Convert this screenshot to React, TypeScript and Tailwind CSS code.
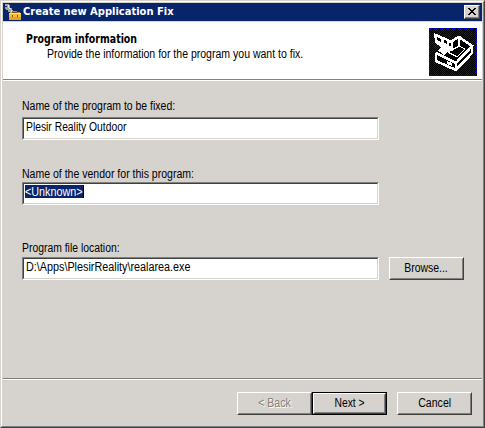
import React from "react";

const FONT = "font-['Liberation_Sans',Arial,sans-serif]";

function Label({ children, scale }: { children: React.ReactNode; scale: string }) {
  return (
    <span className={`block h-[14px] w-max origin-left whitespace-pre text-[12px] leading-[14px] ${scale}`}>
      {children}
    </span>
  );
}

function Field({ value, scale, selected = false }: { value: string; scale: string; selected?: boolean }) {
  return (
    <div className="h-[23px] w-[357px] border border-t-[#808080] border-l-[#808080] border-r-white border-b-white">
      <div className="flex h-[21px] border border-t-[#404040] border-l-[#404040] border-r-[#d6d3ce] border-b-[#d6d3ce] bg-white pl-px pt-px">
        <span
          className={`h-[13px] whitespace-pre text-[12px] leading-[14px] ${
            selected ? "w-[59px] border-r border-black bg-[#08246b] text-white" : "pl-px"
          }`}
        >
          <span className={`block w-max origin-left ${scale}`}>{value}</span>
        </span>
      </div>
    </div>
  );
}

function Button({
  children,
  scale,
  primary = false,
  disabled = false,
}: {
  children: React.ReactNode;
  scale: string;
  primary?: boolean;
  disabled?: boolean;
}) {
  return (
    <button disabled={disabled} className={`block h-[23px] w-[75px] ${primary ? "border border-black" : ""}`}>
      <span className="block h-full border border-t-white border-l-white border-r-[#404040] border-b-[#404040]">
        <span
          className={`flex h-full items-center justify-center border border-t-[#d6d3ce] border-l-[#d6d3ce] border-r-[#808080] border-b-[#808080] whitespace-pre text-[12px] leading-[14px] ${
            disabled ? "text-[#808080] [text-shadow:1px_1px_0_#fff]" : ""
          }`}
        >
          <span className={`block pb-px ${scale}`}>{children}</span>
        </span>
      </span>
    </button>
  );
}

function ToolboxIcon() {
  return (
    <svg width="17" height="17" viewBox="0 0 17 17" shapeRendering="crispEdges">
      <path d="M1 0h4v1h1v3h2v2h1v2h1v3H6V8H4V6H2V5H1V3h2V2H1z" fill="#a5a5a0" />
      <path d="M4 1h1v3H4zM5 4h2v1H5zM7 6h1v2H7z" fill="#e3e3de" />
      <path d="M5 9h3V7h5v1h3v1h1v7H5z" fill="#c98a10" />
      <path d="M5 9h12v4H5z" fill="#f7bd35" />
      <path d="M5 13h12v3H5z" fill="#e9a11b" />
      <path d="M8 8h5v1H8zM8 11h1v2H8zM13 11h1v2h-1z" fill="#80560c" />
      <path d="M5 9h12v1H5z" fill="#ffe083" />
    </svg>
  );
}

function WizardImage() {
  return (
    <svg width="48" height="48" viewBox="0 0 48 48" shapeRendering="crispEdges">
      <defs>
        <pattern id="dither" width="2" height="2" patternUnits="userSpaceOnUse">
          <rect width="2" height="2" fill="#000" />
          <rect width="1" height="1" fill="#0000ff" />
          <rect x="1" y="1" width="1" height="1" fill="#0000ff" />
        </pattern>
      </defs>
      <rect width="48" height="48" fill="url(#dither)" />
      <path d="M.5 .5H47.5V47.5H.5Z" fill="none" stroke="#0000ff" strokeDasharray="2 1" />
      <path d="M6 25 30 8 43 17V25L27 43 6 34Z" fill="#000" />
      <path d="M7 25 27 35 43 18 30 9 21 14M7 25V33L27 42 43 25V18M27 35V42" fill="none" stroke="#fff" strokeWidth="2.6" />
      <path d="M14 21 28 29 36 21 30 18 23 22" fill="none" stroke="#fff" strokeWidth="1.2" />
      <path d="M30 10V18" stroke="#fff" strokeWidth="1.5" />
      <path d="M5 5 24 13V23H21V26L18 24 15 28 12 24 8 23 12 19 6 15Z" fill="#fff" />
      <path d="M8 9 12 11V14L8 12ZM15 12 18 13V16L15 15ZM20 15h2v3h-2z" fill="#000" />
      <path d="M18 33 23 35V38L18 36Z" fill="#fff" />
    </svg>
  );
}

export default function App() {
  return (
    <div className={`h-[428px] w-[485px] border border-t-[#d6d3ce] border-l-[#d6d3ce] border-r-[#404040] border-b-[#404040] bg-[#d6d3ce] text-black ${FONT}`}>
      <div className="flex h-full flex-col border border-t-white border-l-white border-r-[#808080] border-b-[#808080] pl-px pt-px">
        <div className="flex h-[18px] w-[479px] shrink-0 items-center justify-between bg-[#08246b] pl-px pr-[2px]">
          <div className="flex h-full items-center gap-[2px]">
            <ToolboxIcon />
            <span className="origin-left scale-x-[1.005] whitespace-pre font-['DejaVu_Sans_Condensed','DejaVu_Sans',sans-serif] text-[11px] leading-[14px] font-bold text-white">
              Create new Application Fix
            </span>
          </div>
          <button aria-label="Close" className="h-[14px] w-[16px] border border-t-white border-l-white border-r-[#404040] border-b-[#404040] bg-[#d6d3ce]">
            <span className="flex h-full items-center justify-center border-r border-b border-[#808080]">
              <svg width="8" height="7" viewBox="0 0 8 7" shapeRendering="crispEdges">
                <path d="M0 0h2v1h1v1h2V1h1V0h2v1H7v1H6v1H5v1h1v1h1v1h1v1H6V6H5V5H3v1H2v1H0V6h1V5h1V4h1V3H2V2H1V1H0z" />
              </svg>
            </span>
          </button>
        </div>

        <header className="mt-px flex h-[57px] w-[479px] shrink-0 justify-between bg-white pr-[5px]">
          <div className="flex flex-col pl-[22px] pt-[10px]">
            <span className="ml-px h-[13px] w-max origin-left scale-x-[0.91] whitespace-pre font-['DejaVu_Sans_Condensed','DejaVu_Sans',sans-serif] text-[11.5px] leading-[14px] font-bold">
              Program information
            </span>
            <div className="mt-[2px] ml-[22px]">
              <Label scale="scale-x-[0.877]">Provide the information for the program you want to fix.</Label>
            </div>
          </div>
          <div className="pt-[6px]">
            <WizardImage />
          </div>
        </header>
        <div className="h-[2px] w-[479px] shrink-0 border-t border-b border-t-[#808080] border-b-white" />

        <main className="flex grow flex-col pl-[19px] pt-[18px]">
          <Label scale="scale-x-[0.873]">Name of the program to be fixed:</Label>
          <div className="mt-[4px]">
            <Field value="Plesir Reality Outdoor" scale="scale-x-[0.86]" />
          </div>
          <div className="mt-[27px]">
            <Label scale="scale-x-[0.877]">Name of the vendor for this program:</Label>
          </div>
          <div className="mt-px">
            <Field value="<Unknown>" scale="scale-x-[0.9]" selected />
          </div>
          <div className="mt-[36px]">
            <Label scale="scale-x-[0.866]">Program file location:</Label>
          </div>
          <div className="mt-[2px] flex gap-[10px]">
            <Field value={"D:\\Apps\\PlesirReality\\realarea.exe"} scale="scale-x-[0.9]" />
            <Button scale="scale-x-[0.87]">Browse...</Button>
          </div>
        </main>

        <footer className="flex h-[48px] w-[479px] shrink-0 justify-end border-t border-[#808080]">
          <div className="flex w-full justify-end border-t border-white pt-[12px] pr-[10px]">
            <Button scale="scale-x-[0.88]" disabled>{"< Back"}</Button>
            <Button scale="scale-x-[0.86]" primary>{"Next >"}</Button>
            <div className="ml-[10px]">
              <Button scale="scale-x-[0.88]">Cancel</Button>
            </div>
          </div>
        </footer>
      </div>
    </div>
  );
}
